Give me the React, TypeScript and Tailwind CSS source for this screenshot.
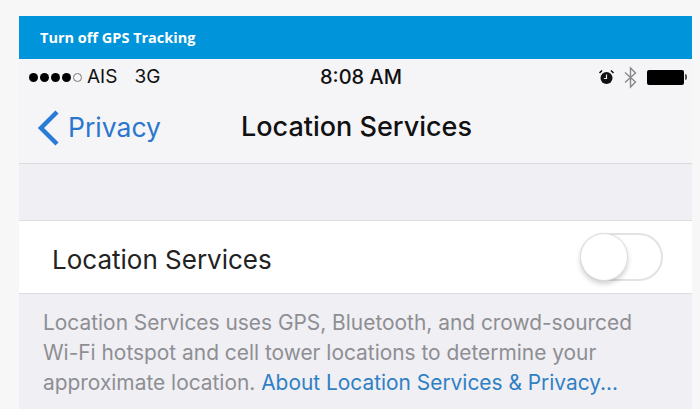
export default function App() {
  return (
    <div className="h-[409px] w-[700px] overflow-hidden bg-[#f7f7f8] pl-[19px] pr-2 pt-4 font-['Inter',sans-serif]">
      <div className="flex h-[43px] items-center bg-[#0094da] pl-[21px] font-['Open_Sans',sans-serif] text-[14.5px] font-bold text-white">
        Turn off GPS Tracking
      </div>
      <div className="h-[105px] border-b border-[#d9d9de] bg-[#f5f5f8]">
        <div className="flex h-9 items-center pl-[10px] pr-[5px] text-[#111]">
          <div className="flex w-[291px] items-center">
            <div className="flex items-center gap-[2px]">
              <span className="h-[9px] w-[9px] rounded-full bg-black"></span>
              <span className="h-[9px] w-[9px] rounded-full bg-black"></span>
              <span className="h-[9px] w-[9px] rounded-full bg-black"></span>
              <span className="h-[9px] w-[9px] rounded-full bg-black"></span>
              <span className="h-[9px] w-[9px] rounded-full border border-[#777]"></span>
            </div>
            <span className="ml-[5px] text-[19px]">AIS</span>
            <span className="ml-[17px] text-[19px]">3G</span>
          </div>
          <span className="text-[20px] font-medium">8:08 AM</span>
          <div className="ml-auto flex items-center">
            <svg width="17" height="16" viewBox="0 0 17 16">
              <circle cx="8.5" cy="9" r="6" fill="#111" />
              <path d="M8.5 5.5V9.5H6" fill="none" stroke="#eee" strokeWidth="1.2" />
              <path d="M1.5 4 4 1.5M15.5 4 13 1.5" stroke="#111" strokeWidth="1.6" />
            </svg>
            <svg className="ml-[9px]" width="13" height="23" viewBox="0 0 13 23">
              <path d="M1 6.5 11.5 16 6.5 21V2l5 5L1 16.5" fill="none" stroke="#888" strokeWidth="1.4" />
            </svg>
            <div className="ml-[10px] h-[15px] w-[37px] rounded-[2px] bg-black"></div>
            <div className="ml-px h-[6px] w-[2px] rounded-r-sm bg-[#555]"></div>
          </div>
        </div>
        <div className="flex h-[68px] items-center pb-[3px] pl-[18px]">
          <svg width="22" height="36" viewBox="0 0 22 36">
            <path d="M20 2 4 18l16 16" fill="none" stroke="#2a7bd6" strokeWidth="4.5" />
          </svg>
          <span className="ml-[9px] w-[173px] text-[26.5px] text-[#2a76cf]">Privacy</span>
          <span className="text-[27px] font-medium text-[#111]">Location Services</span>
        </div>
      </div>
      <div className="h-[57px] border-b border-[#dcdce1] bg-[#efeff4]"></div>
      <div className="flex h-[73px] items-center justify-between border-b border-[#dcdce1] bg-white pl-[33px] pr-[29px]">
        <span className="pt-1 text-[26px] text-[#222]">Location Services</span>
        <div className="relative h-[48px] w-[83px] rounded-full border-2 border-[#e2e2e2] bg-white">
          <div className="absolute -left-0.5 -top-0.5 h-[48px] w-[48px] rounded-full border border-[#ddd] bg-white shadow-[0_3px_5px_rgba(0,0,0,0.18)]"></div>
        </div>
      </div>
      <div className="h-[115px] whitespace-nowrap bg-[#efeff4] pl-[24px] pt-[14px] text-[20.9px] leading-[30px] text-[#8e8e93]">
        <p>Location Services uses GPS, Bluetooth, and crowd-sourced</p>
        <p>Wi-Fi hotspot and cell tower locations to determine your</p>
        <p>
          approximate location.{" "}
          <span className="text-[#2f7fc4]">About Location Services &amp; Privacy...</span>
        </p>
      </div>
    </div>
  );
}
